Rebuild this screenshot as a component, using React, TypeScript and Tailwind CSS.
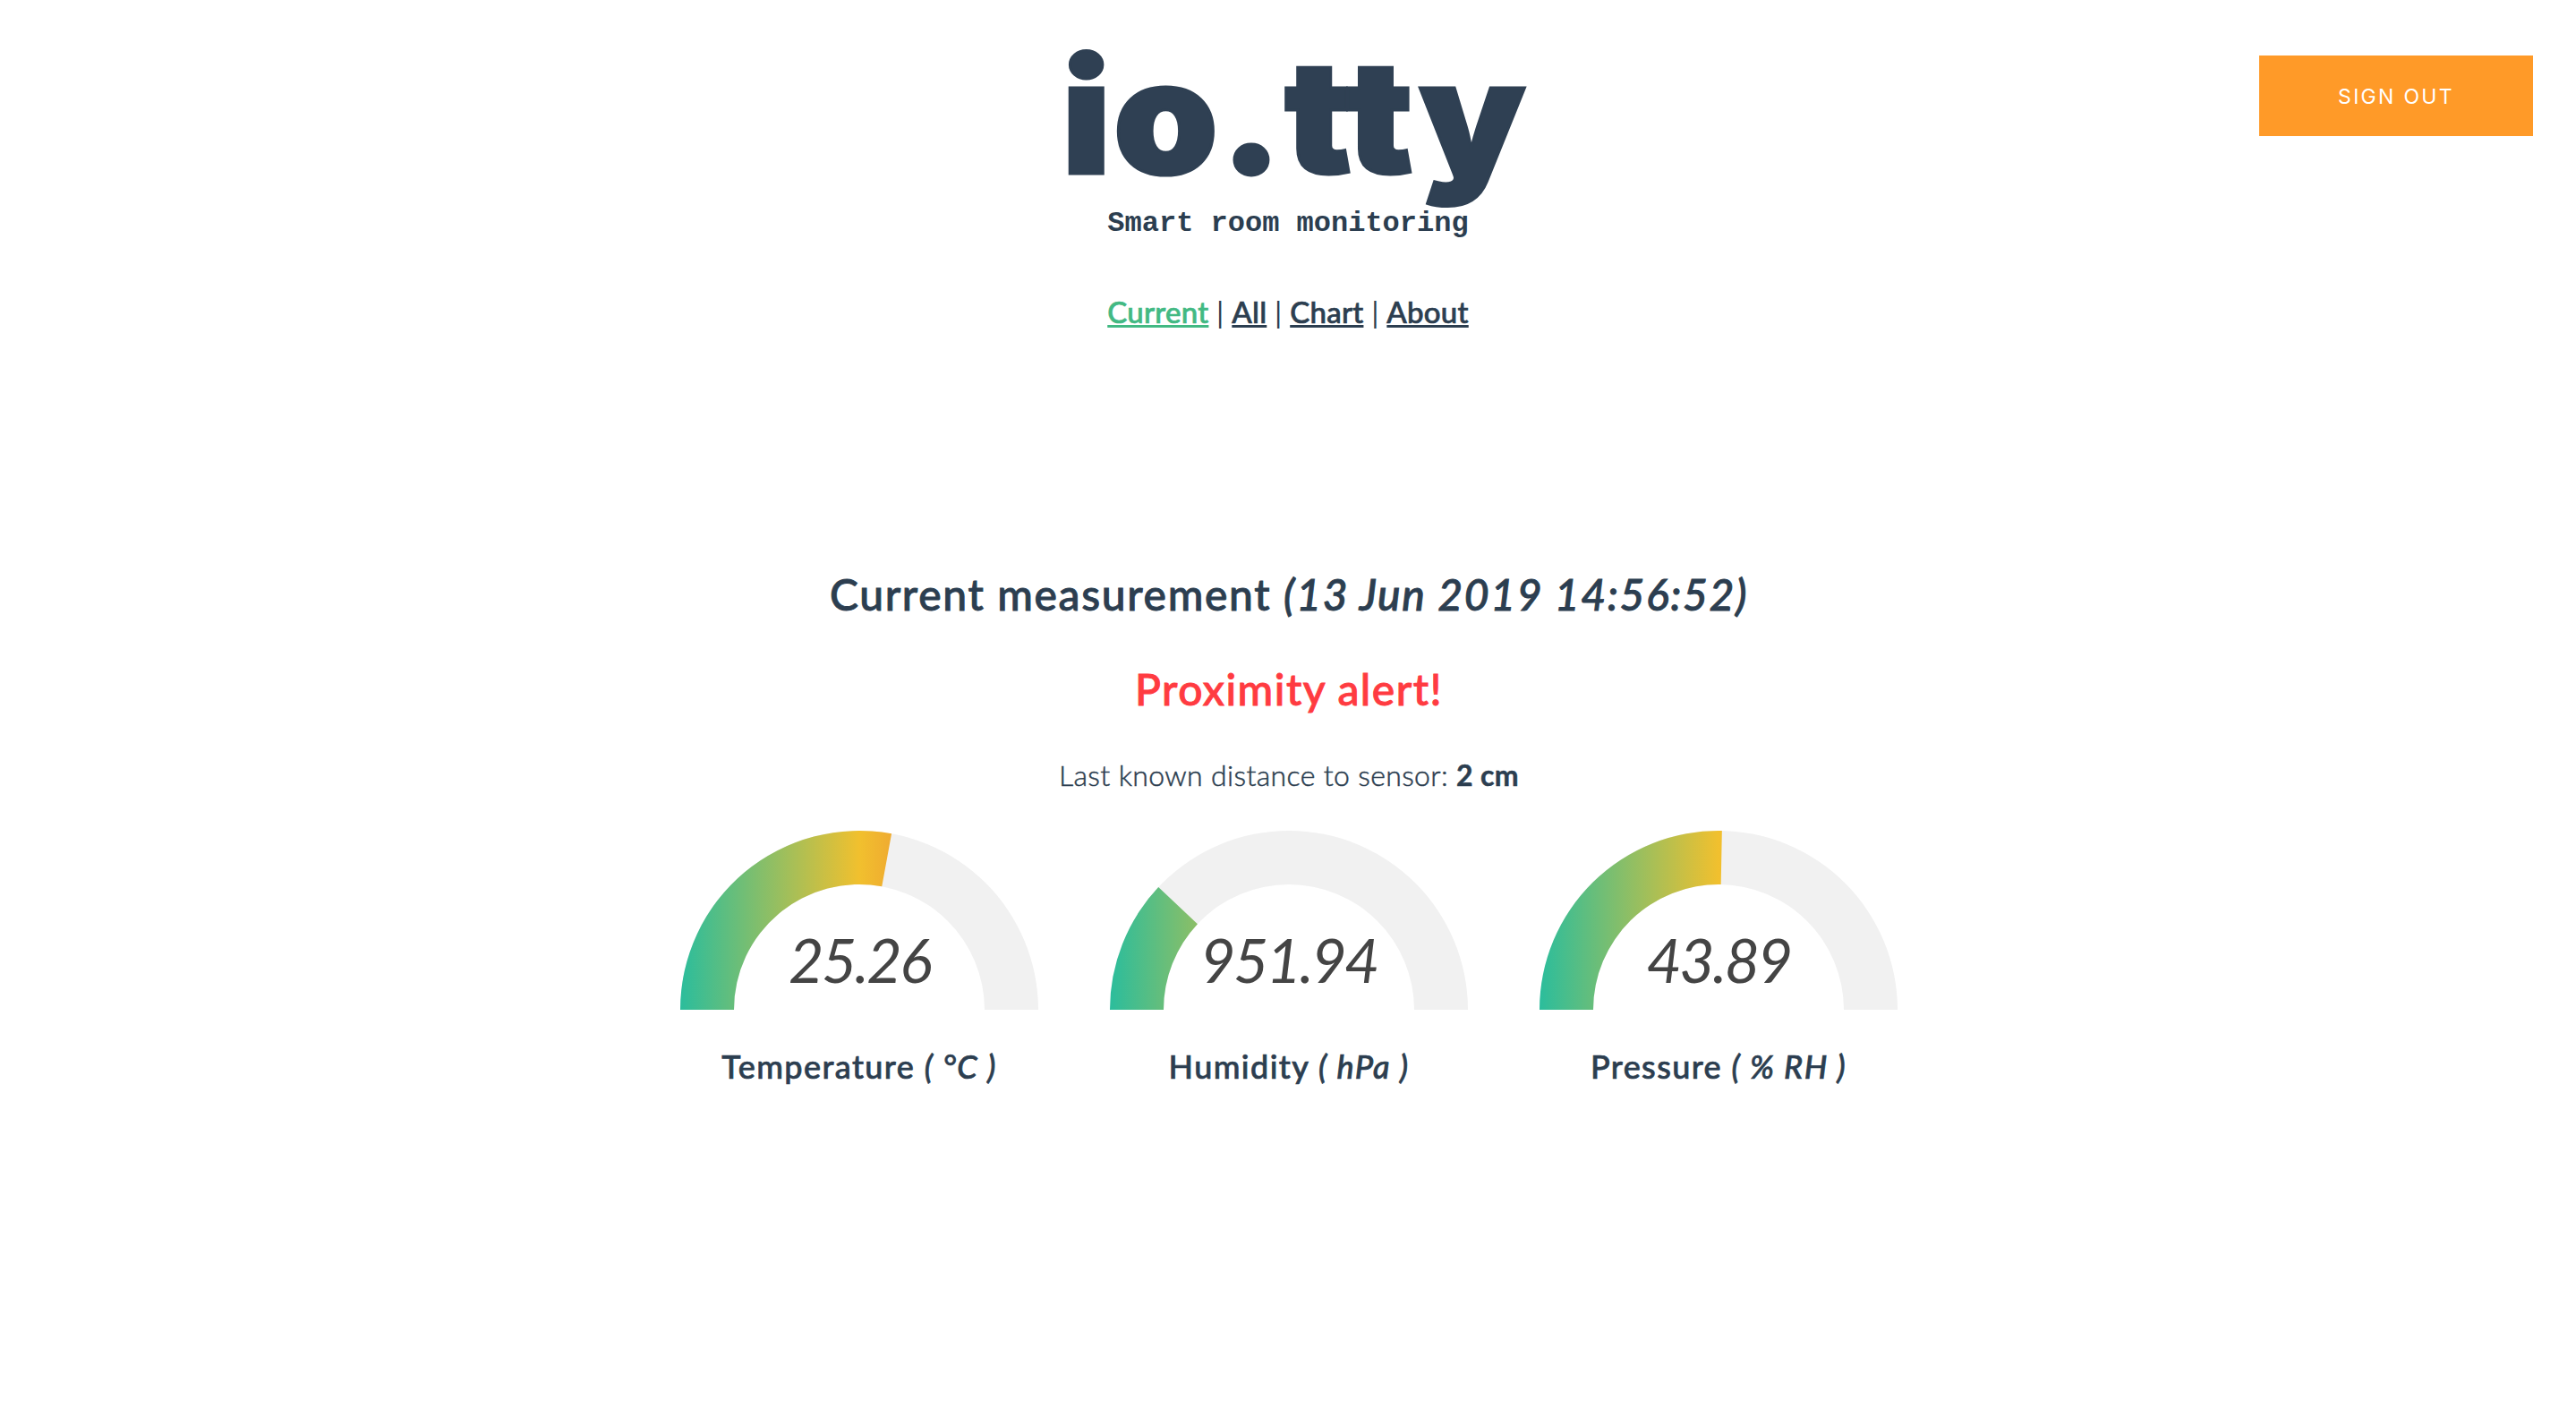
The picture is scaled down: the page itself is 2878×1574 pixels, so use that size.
const TEXT_FONT = "font-['Lato',sans-serif]";

const GAUGES = [
  { id: 'temp', value: '25.26', angle: 100.4, name: 'Temperature', unit: '( °C )' },
  { id: 'hum', value: '951.94', angle: 43.2, name: 'Humidity', unit: '( hPa )' },
  { id: 'press', value: '43.89', angle: 91.1, name: 'Pressure', unit: '( % RH )' },
];

function arcPath(from: number, to: number) {
  const point = (r: number, deg: number) => {
    const a = (deg * Math.PI) / 180;
    return `${200 - r * Math.cos(a)} ${200 - r * Math.sin(a)}`;
  };
  return `M${point(200, from)} A200 200 0 0 1 ${point(200, to)} L${point(140, to)} A140 140 0 0 0 ${point(140, from)} Z`;
}

function Gauge({ id, value, angle, name, unit }: (typeof GAUGES)[number]) {
  return (
    <div className="flex w-[400px] flex-col items-center">
      <div className="relative h-[200px] w-[400px]">
        <svg width="400" height="200" viewBox="0 0 400 200" className="block">
          <defs>
            <linearGradient id={id} gradientUnits="userSpaceOnUse" x1="0" y1="200" x2="400" y2="200">
              <stop offset="0" stopColor="#2bbd9c" />
              <stop offset="0.5" stopColor="#f1c02e" />
              <stop offset="1" stopColor="#e74c3c" />
            </linearGradient>
          </defs>
          <path d={arcPath(0, 180)} fill="#f1f1f1" />
          <path d={arcPath(0, angle)} fill={`url(#${id})`} />
        </svg>
        <div className="absolute inset-x-0 top-[102px] text-center text-[68px] leading-[84px] font-normal tracking-[-2.5px] text-[#444] italic">
          {value}
        </div>
      </div>
      <p className="mt-[38px] text-[36px] leading-[50px] font-medium tracking-[1.4px] text-[#2c3e50] [-webkit-text-stroke:0.7px_#2c3e50]">
        {name} <em>{unit}</em>
      </p>
    </div>
  );
}

export default function App() {
  return (
    <div className={`min-h-screen bg-white text-[#2c3e50] ${TEXT_FONT}`}>
      <header className="grid grid-cols-[1fr_auto_1fr]">
        <div />
        <div className="flex flex-col items-center">
          <div className="mt-[21px] ml-[14px] h-[211px] scale-x-[1.065] text-[176px] leading-[218px] font-black tracking-[2px] text-[#2f4053] [-webkit-text-stroke:3px_#2f4053] font-['Inter',sans-serif]">
            io.tty
          </div>
          <div className="text-[32px] leading-[36px] font-bold font-['Liberation_Mono',monospace]">
            Smart room monitoring
          </div>
          <nav className="mt-[58px] text-[33px] leading-[44px] font-medium tracking-[0.25px] [-webkit-text-stroke:0.7px_currentColor]">
            <a className="text-[#42b983] underline">Current</a>
            <span className="font-normal [-webkit-text-stroke:0]"> | </span>
            <a className="underline">All</a>
            <span className="font-normal [-webkit-text-stroke:0]"> | </span>
            <a className="underline">Chart</a>
            <span className="font-normal [-webkit-text-stroke:0]"> | </span>
            <a className="underline">About</a>
          </nav>
        </div>
        <div className="flex justify-end pt-[62px] pr-[48px]">
          <button className="h-[90px] w-[306px] bg-[#ff9a28] pt-[2px] text-[23px] tracking-[0.1em] text-white font-['Inter',sans-serif]">
            SIGN OUT
          </button>
        </div>
      </header>

      <main className="mt-[262px] flex flex-col items-center pl-[2px]">
        <h1 className="text-[48px] leading-[64px] font-medium tracking-[1.65px] [-webkit-text-stroke:0.9px_currentColor]">
          Current measurement <em>(13 Jun 2019 14:56:52)</em>
        </h1>
        <h2 className="mt-[42px] text-[48px] leading-[64px] font-medium tracking-[1.45px] text-[#ff3b41] [-webkit-text-stroke:0.9px_currentColor]">
          Proximity alert!
        </h2>
        <p className="mt-[42px] text-[32px] leading-[44px] font-light tracking-[0.35px] text-[#2c3e50] [-webkit-text-stroke:0.5px_#2c3e50]">
          Last known distance to sensor: <strong className="font-bold">2 cm</strong>
        </p>
        <div className="mt-[40px] flex gap-[80px]">
          {GAUGES.map((g) => (
            <Gauge key={g.id} {...g} />
          ))}
        </div>
      </main>
    </div>
  );
}
